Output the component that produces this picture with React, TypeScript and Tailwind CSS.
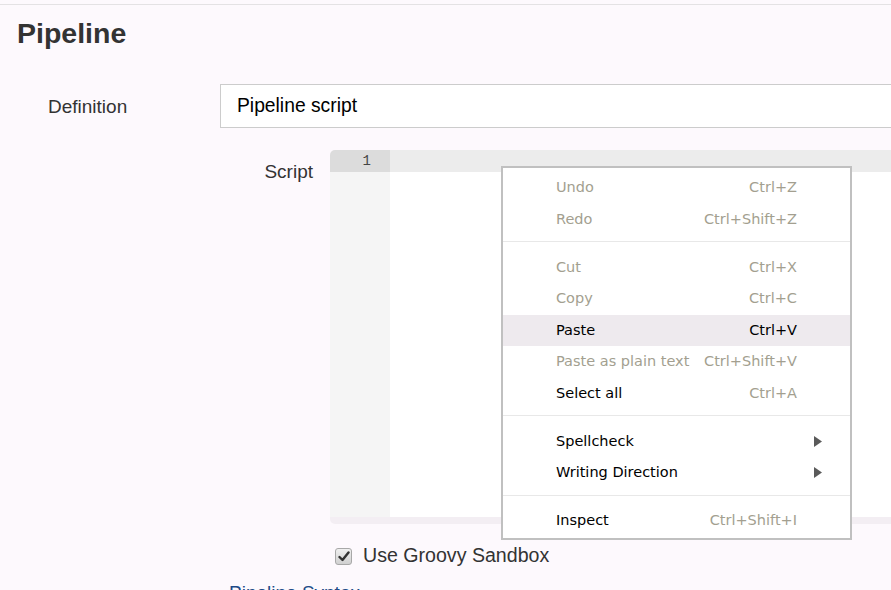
import React from "react";

type Item =
  | { sep: true }
  | { sep?: false; label: string; shortcut?: string; disabled?: boolean; active?: boolean; arrow?: boolean; shortcutDisabled?: boolean };

const items: Item[] = [
  { label: "Undo", shortcut: "Ctrl+Z", disabled: true },
  { label: "Redo", shortcut: "Ctrl+Shift+Z", disabled: true },
  { sep: true },
  { label: "Cut", shortcut: "Ctrl+X", disabled: true },
  { label: "Copy", shortcut: "Ctrl+C", disabled: true },
  { label: "Paste", shortcut: "Ctrl+V", active: true },
  { label: "Paste as plain text", shortcut: "Ctrl+Shift+V", disabled: true },
  { label: "Select all", shortcut: "Ctrl+A", shortcutDisabled: true },
  { sep: true },
  { label: "Spellcheck", arrow: true },
  { label: "Writing Direction", arrow: true },
  { sep: true },
  { label: "Inspect", shortcut: "Ctrl+Shift+I", shortcutDisabled: true },
];

function Arrow() {
  return (
    <svg width="8" height="11" viewBox="0 0 8 11" className="block">
      <path d="M0 0 L8 5.5 L0 11 Z" fill="#5a5a5a" />
    </svg>
  );
}

function ContextMenu() {
  return (
    <div className="absolute left-[501px] top-[166px] w-[351px] h-[374px] bg-white border-2 border-[#c0c0c0] pt-[4px] font-['DejaVu_Sans',sans-serif] text-[14.5px]">
      {items.map((it, i) =>
        it.sep ? (
          <div key={i} className="h-[16.5px] pt-[6px]">
            <div className="h-px bg-[#e8e8e8]" />
          </div>
        ) : (
          <div
            key={i}
            className={
              "h-[31.5px] flex items-center pl-[53px] pr-[53px] pt-[1px] relative " +
              (it.active ? "bg-[#eeeaee]" : "")
            }
          >
            <span className={"flex-1 " + (it.disabled ? "text-[#a39f90]" : "text-black")}>{it.label}</span>
            {it.shortcut && (
              <span className={it.disabled || it.shortcutDisabled ? "text-[#a39f90]" : "text-black"}>
                {it.shortcut}
              </span>
            )}
            {it.arrow && (
              <span className="absolute right-[28px] top-[10px]">
                <Arrow />
              </span>
            )}
          </div>
        )
      )}
    </div>
  );
}

export default function App() {
  return (
    <div className="relative w-[891px] h-[590px] overflow-hidden bg-[#fdf9fd] font-['Liberation_Sans',Arial,sans-serif] text-[#333]">
      <div className="h-[4px]" />
      <div className="h-px bg-[#e4e2e4]" />
      <h1 className="mt-[12px] ml-[17px] text-[28.5px] leading-[32px] font-bold text-[#333]">Pipeline</h1>

      <div className="mt-[35px] flex items-center h-[44px]">
        <div className="w-[220px] pl-[48px] text-[19px] leading-[22px] pt-[1px]">Definition</div>
        <div className="flex-1 h-[44px] border border-[#cccccc] border-r-0 bg-white flex items-center pl-[16px] pt-[1px] text-[19.3px] text-black">
          Pipeline script
        </div>
      </div>

      <div className="mt-[22px] flex">
        <div className="w-[313px] text-right text-[19px] leading-[22px] pt-[11px]">Script</div>
        <div className="ml-[17px] flex-1 h-[374px] flex flex-col rounded-l-[5px] overflow-hidden">
          <div className="h-[22px] flex">
            <div className="w-[60px] bg-[#dcdcdc] text-right pr-[19px] font-['Liberation_Mono',monospace] text-[14px] leading-[22px] text-[#444]">
              1
            </div>
            <div className="flex-1 bg-[#ececec]" />
          </div>
          <div className="flex-1 flex">
            <div className="w-[60px] bg-[#f5f5f5]" />
            <div className="flex-1 bg-white" />
          </div>
          <div className="h-[7px] bg-[#f3eef3]" />
        </div>
      </div>

      <div className="mt-[20px] ml-[335px] flex items-center gap-[11px]">
        <div className="w-[17px] h-[17px] mt-[3px] rounded-[3px] border border-[#a8a8a8] bg-gradient-to-b from-[#f0f0f0] to-[#d0d0d0] flex items-center justify-center">
          <svg width="12" height="11" viewBox="0 0 12 11">
            <path d="M1.5 6 L4.5 9 L10.5 1.5" stroke="#333" strokeWidth="2.4" fill="none" strokeLinecap="round" strokeLinejoin="round" />
          </svg>
        </div>
        <span className="text-[19.6px] leading-[22px] text-[#333]">Use Groovy Sandbox</span>
      </div>

      <div className="mt-[16px] ml-[229px] text-[19px] leading-[22px] text-[#204a87]">Pipeline Syntax</div>

      <ContextMenu />
    </div>
  );
}
